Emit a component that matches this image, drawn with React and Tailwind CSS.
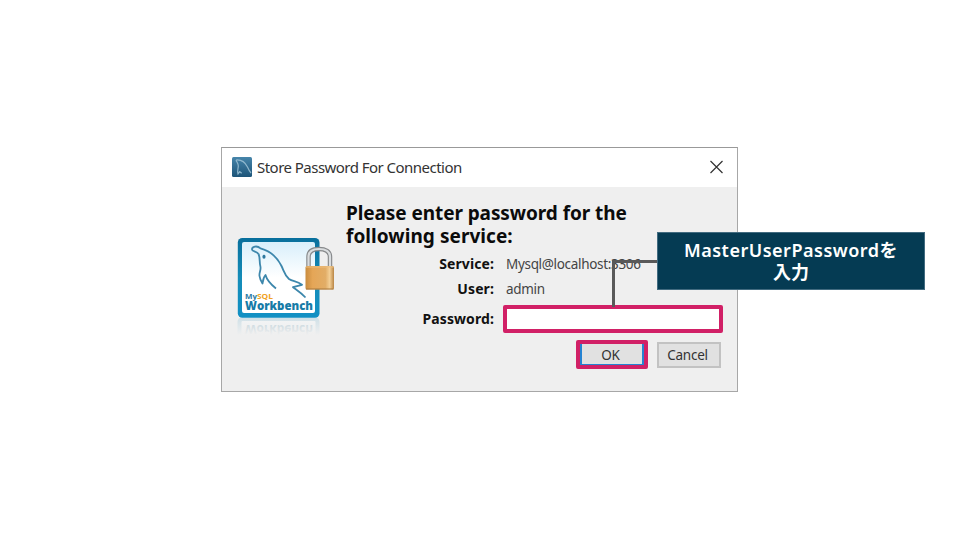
function AppIcon() {
  return (
    <svg className="h-5 w-5 shrink-0" viewBox="0 0 20 20" fill="none">
      <defs>
        <linearGradient id="appIconFill" x1="0" y1="0" x2="0" y2="1">
          <stop offset="0" stopColor="#4685aa" />
          <stop offset="1" stopColor="#1d5478" />
        </linearGradient>
      </defs>
      <rect width="20" height="20" rx="1.5" fill="url(#appIconFill)" />
      <path
        d="M4 3C9 2.500 13 5 15.500 10c1 2.300 1.700 4 3.500 6M4 3c.5 2 2.300 3 2.300 6 0 2-1.300 5-.3 8l1.700-2.300 2 1.500"
        stroke="#8fb7cd"
        strokeWidth="1.2"
      />
    </svg>
  );
}

function WorkbenchLogo() {
  return (
    <svg className="h-[110px] w-[104px] shrink-0" viewBox="0 0 104 110" fill="none">
      <defs>
        <linearGradient id="frame" x1="0" y1="0" x2="0" y2="1">
          <stop offset="0" stopColor="#086f9c" />
          <stop offset="0.5" stopColor="#158cb8" />
          <stop offset="1" stopColor="#1190c4" />
        </linearGradient>
        <linearGradient id="panel" x1="0" y1="0" x2="0" y2="1">
          <stop offset="0" stopColor="#d8effb" />
          <stop offset="0.5" stopColor="#ffffff" />
        </linearGradient>
        <linearGradient id="brass" x1="0" y1="0" x2="1" y2="0">
          <stop offset="0" stopColor="#c98c3e" />
          <stop offset="0.25" stopColor="#e5a657" />
          <stop offset="0.7" stopColor="#e2ad66" />
          <stop offset="0.85" stopColor="#f3cf96" />
          <stop offset="1" stopColor="#b98545" />
        </linearGradient>
        <linearGradient id="fade" x1="0" y1="0" x2="0" y2="1">
          <stop offset="0" stopColor="#efefef" stopOpacity="0.2" />
          <stop offset="1" stopColor="#efefef" />
        </linearGradient>
        <clipPath id="reflectionClip">
          <rect x="0" y="93" width="90" height="17" />
        </clipPath>
      </defs>

      <g clipPath="url(#reflectionClip)" opacity="0.55">
        <rect x="4.500" y="94" width="78" height="30" rx="3" fill="#f7fbfd" stroke="#a9d0df" strokeWidth="4" />
        <text
          transform="translate(10 99.500) scale(1 -1)"
          textLength="68"
          lengthAdjust="spacingAndGlyphs"
          fontSize="12"
          fontWeight="700"
          fontFamily="Open Sans, sans-serif"
          fill="#7baabd"
        >
          Workbench
        </text>
      </g>
      <rect x="0" y="93" width="90" height="17" fill="url(#fade)" />

      <rect x="2.800" y="13" width="81.700" height="79.800" rx="4.500" fill="url(#frame)" />
      <rect x="7" y="17" width="73" height="71" rx="2" fill="url(#panel)" />

      <path
        d="M23.500 29C22 26 17 26.500 17 24.500c-.2-3 5-4.300 8.500-1.200C34 25.500 42 32 46.500 41c2.500 5 3 9 7.500 13 4 2.500 8 2 13 5.800l-9 2.400c4 3 8 5.500 12.500 10.300"
        stroke="#3d87ac"
        strokeWidth="1.800"
        strokeLinejoin="round"
      />
      <path
        d="M23.500 29c2 4 .5 8 2 13 .5 4-1.500 5-1 9 .3 3 1.500 5 3 7.500.5-3.500.7-6 3-8.500 1.500 5.500 5.500 9.500 10.500 13.500"
        stroke="#3d87ac"
        strokeWidth="1.800"
        strokeLinejoin="round"
      />
      <ellipse cx="29" cy="31.700" rx="1.600" ry="2" fill="#2d789f" />

      <text x="10" y="73.500" textLength="12" lengthAdjust="spacingAndGlyphs" fontSize="6.500" fontWeight="700" fontFamily="Open Sans, sans-serif" fill="#2d7ba4">
        My
      </text>
      <text x="22" y="73.500" textLength="16" lengthAdjust="spacingAndGlyphs" fontSize="6.500" fontWeight="700" fontFamily="Open Sans, sans-serif" fill="#f1a324">
        SQL
      </text>
      <text x="10" y="84.700" textLength="68" lengthAdjust="spacingAndGlyphs" fontSize="12" fontWeight="800" fontFamily="Open Sans, sans-serif" fill="#167ba7">
        Workbench
      </text>

      <path d="M73.500 42V32c0-5.500 4-8 10.500-8s11 2.500 11 8v10" stroke="#87898b" strokeWidth="4.500" />
      <path d="M73.500 42V32c0-5.500 4-8 10.500-8s11 2.500 11 8v10" stroke="#dadddf" strokeWidth="2.200" />
      <rect x="70.500" y="41" width="28.500" height="23.500" rx="1.500" fill="url(#brass)" />
      <path d="M71 42h27.500" stroke="#edbe7e" />
      <path d="M71 64h27.500" stroke="#a9783c" />
    </svg>
  );
}

function Field({ label, value }) {
  return (
    <div className="flex h-[25px] items-center">
      <span className="w-[148px] pb-[2px] text-right text-[14px] font-bold tracking-[0.1px] text-[#111]">{label}</span>
      <span className="ml-3 text-[13.5px] tracking-[-0.32px] text-[#444]">{value}</span>
    </div>
  );
}

function Callout() {
  return (
    <>
      <div className="absolute left-[612px] top-[260px] h-[47px] w-[46px] border-l-[3px] border-t-[3px] border-[#595959]" />
      <div className="absolute left-[657px] top-[232px] flex h-[58px] w-[268px] flex-col items-center border border-[#426b80] bg-[#053b53] pt-[6px] text-center text-[18px] font-semibold leading-[22px] text-white font-['Noto_Sans','Noto_Sans_CJK_JP',sans-serif]">
        <span className="whitespace-nowrap tracking-[0.5px]">MasterUserPasswordを</span>
        <span>入力</span>
      </div>
    </>
  );
}

export default function App() {
  return (
    <main className="relative h-[540px] w-[960px] overflow-hidden bg-white pl-[221px] pt-[147px]">
      <section className="flex h-[245px] w-[517px] flex-col border border-[#a7a7a7] border-t-[#999] bg-[#efefef] font-['Noto_Sans',sans-serif]">
        <header className="flex h-[39px] shrink-0 items-center bg-white pb-px pl-[10px] pr-[14px]">
          <AppIcon />
          <h1 className="ml-[5px] whitespace-nowrap text-[15px] tracking-[-0.53px] text-[#333]">Store Password For Connection</h1>
          <svg className="ml-auto h-[14px] w-[14px]" viewBox="0 0 14 14" stroke="#333" strokeWidth="1.200">
            <path d="M1.500 1l12 12M13.500 1l-12 12" />
          </svg>
        </header>
        <div className="flex flex-1 pl-[13px]">
          <div className="pt-[38px]">
            <WorkbenchLogo />
          </div>
          <div className="ml-[7px] flex-1 pt-[15px]">
            <h2 className="whitespace-nowrap text-[19px] font-bold leading-[23px] tracking-[-0.08px] text-[#0b0b0b]">
              Please enter password for the
              <br />
              <span className="tracking-[0.06px]">following service:</span>
            </h2>
            <div className="mt-1">
              <Field label="Service:" value="Mysql@localhost:3306" />
              <Field label="User:" value="admin" />
            </div>
            <div className="mt-[3px] flex h-7 items-center">
              <span className="w-[148px] pb-px text-right text-[14px] font-bold tracking-[0.1px] text-[#111]">Password:</span>
              <div className="ml-[9px] h-7 w-[220px] rounded-[2px] border-4 border-[#d12066] bg-white" />
            </div>
            <div className="mt-[7px] flex items-center pl-[230px]">
              <button className="h-[29px] w-[72px] rounded-[2px] border-4 border-[#d12066] bg-[#e1e1e1] text-[13.5px] text-[#333]">
                <span className="flex h-full items-center justify-center border-x-2 border-b border-[#2583d2] pr-[3px] pt-[2px] tracking-[-0.3px]">OK</span>
              </button>
              <button className="ml-[9px] h-[26px] w-[64px] border-2 border-[#c2c2c2] bg-[#e1e1e1] pr-[3px] text-[13.5px] leading-[22px] tracking-[-0.25px] text-[#333]">Cancel</button>
            </div>
          </div>
        </div>
      </section>
      <Callout />
    </main>
  );
}
